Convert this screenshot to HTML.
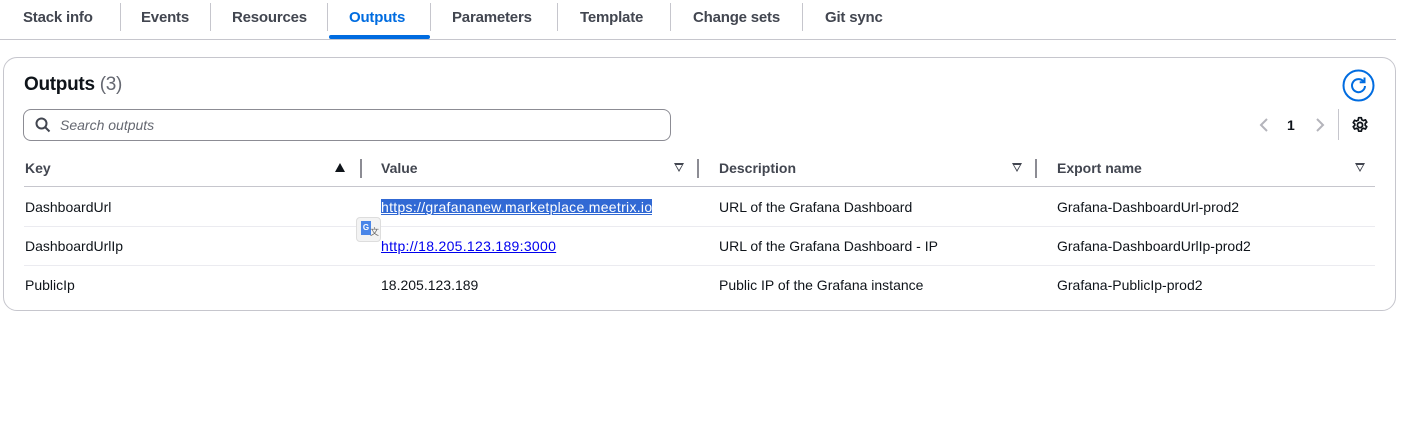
<!DOCTYPE html>
<html><head><meta charset="utf-8"><style>
*{box-sizing:border-box;margin:0;padding:0}
body{width:1419px;height:437px;background:#fff;font-family:"Liberation Sans",Arial,sans-serif;color:#0f141a;position:relative;overflow:hidden}
.a{position:absolute;white-space:nowrap}
.tab{position:absolute;top:9px;font-size:15px;font-weight:bold;color:#424650;letter-spacing:-0.2px}
.sep{position:absolute;top:3px;width:1px;height:28px;background:#c6c6cd}
.th{position:absolute;top:160px;font-size:14px;font-weight:bold;color:#424650}
.td{position:absolute;font-size:14px;color:#0f141a}
.cs{position:absolute;top:159px;width:2px;height:19px;background:#8c8c94}
.rl{position:absolute;left:24px;width:1351px;height:1px;background:#ebebf0}
a{color:#0000ee}
.tri{position:absolute;top:163px;width:0;height:0;border-left:5px solid transparent;border-right:5px solid transparent}
</style></head><body>
<div class="tab" style="left:23px">Stack info</div>
<div class="sep" style="left:120px"></div>
<div class="tab" style="left:141px">Events</div>
<div class="sep" style="left:210px"></div>
<div class="tab" style="left:232px">Resources</div>
<div class="sep" style="left:327px"></div>
<div class="tab" style="left:349px;color:#006ce0">Outputs</div>
<div class="a" style="left:329px;top:35px;width:101px;height:4px;background:#006ce0;border-radius:2px"></div>
<div class="sep" style="left:430px"></div>
<div class="tab" style="left:452px">Parameters</div>
<div class="sep" style="left:557px"></div>
<div class="tab" style="left:580px">Template</div>
<div class="sep" style="left:670px"></div>
<div class="tab" style="left:693px">Change sets</div>
<div class="sep" style="left:802px"></div>
<div class="tab" style="left:825px">Git sync</div>
<div class="a" style="left:0;top:39px;width:1396px;height:1px;background:#c6c6cd"></div>

<div class="a" style="left:3px;top:57px;width:1393px;height:254px;border:1px solid #c6c6cd;border-radius:14px"></div>
<div class="a" style="left:24px;top:74px;font-size:19px;font-weight:bold;letter-spacing:-0.3px">Outputs <span style="font-weight:normal;color:#656871">(3)</span></div>
<svg class="a" style="left:1342px;top:69px" width="33" height="33" viewBox="0 0 33 33"><circle cx="16.5" cy="16.5" r="15" fill="none" stroke="#006ce0" stroke-width="2"/><path d="M21.5 12.5 A6.5 6.5 0 1 0 23 17" fill="none" stroke="#006ce0" stroke-width="2"/><path d="M22.5 8.5 v4.8 h-4.8" fill="none" stroke="#006ce0" stroke-width="2"/></svg>

<div class="a" style="left:23px;top:109px;width:648px;height:32px;border:1px solid #8c8c94;border-radius:8px"></div>
<svg class="a" style="left:35px;top:117px" width="16" height="16" viewBox="0 0 16 16"><circle cx="6.5" cy="6.5" r="5" fill="none" stroke="#424650" stroke-width="2"/><path d="M10 10l4.5 4.5" stroke="#424650" stroke-width="2"/></svg>
<div class="a" style="left:60px;top:117px;font-size:14px;font-style:italic;color:#656871">Search outputs</div>

<svg class="a" style="left:1258px;top:117px" width="12" height="16" viewBox="0 0 12 16"><path d="M9 2L3 8l6 6" fill="none" stroke="#b4b4bb" stroke-width="2"/></svg>
<div class="a" style="left:1287px;top:117px;font-size:14px;font-weight:bold">1</div>
<svg class="a" style="left:1314px;top:117px" width="12" height="16" viewBox="0 0 12 16"><path d="M3 2l6 6-6 6" fill="none" stroke="#b4b4bb" stroke-width="2"/></svg>
<div class="a" style="left:1338px;top:109px;width:1px;height:31px;background:#c6c6cd"></div>
<svg class="a" style="left:1351px;top:116px" width="18" height="18" viewBox="0 0 16 16"><circle cx="8" cy="8" r="2.3" fill="none" stroke="#0f141a" stroke-width="1.6"/><path d="M6.8 1.5h2.4l.4 1.8 1.5.8 1.7-.7 1.2 2.1-1.4 1.2v1.6l1.4 1.2-1.2 2.1-1.7-.7-1.5.8-.4 1.8H6.8l-.4-1.8-1.5-.8-1.7.7-1.2-2.1 1.4-1.2V7.1L2 5.9l1.2-2.1 1.7.7 1.5-.8z" fill="none" stroke="#0f141a" stroke-width="1.5" stroke-linejoin="round"/></svg>

<div class="th" style="left:25px">Key</div>
<div class="tri" style="left:335px;border-bottom:9px solid #0f141a;top:163px"></div>
<div class="cs" style="left:360px"></div>
<div class="th" style="left:381px">Value</div>
<div class="tri" style="left:674px;border-top:9px solid #424650"></div>
<div class="a" style="left:676px;top:165px;width:0;height:0;border-left:3px solid transparent;border-right:3px solid transparent;border-top:5px solid #fff"></div>
<div class="cs" style="left:697px"></div>
<div class="th" style="left:719px">Description</div>
<div class="tri" style="left:1012px;border-top:9px solid #424650"></div>
<div class="a" style="left:1014px;top:165px;width:0;height:0;border-left:3px solid transparent;border-right:3px solid transparent;border-top:5px solid #fff"></div>
<div class="cs" style="left:1035px"></div>
<div class="th" style="left:1057px">Export name</div>
<div class="tri" style="left:1355px;border-top:9px solid #424650"></div>
<div class="a" style="left:1357px;top:165px;width:0;height:0;border-left:3px solid transparent;border-right:3px solid transparent;border-top:5px solid #fff"></div>
<div class="a" style="left:24px;top:186px;width:1351px;height:1px;background:#c6c6cd"></div>

<div class="td" style="left:25px;top:199px">DashboardUrl</div>
<div class="td" style="left:381px;top:199px;background:#3169d4;letter-spacing:0.3px"><a style="color:#fff" href="#">https://grafananew.marketplace.meetrix.io</a></div>
<div class="td" style="left:719px;top:199px">URL of the Grafana Dashboard</div>
<div class="td" style="left:1057px;top:199px">Grafana-DashboardUrl-prod2</div>
<div class="rl" style="top:226px"></div>
<div class="td" style="left:25px;top:238px">DashboardUrlIp</div>
<div class="td" style="left:381px;top:238px;letter-spacing:0.3px"><a href="#">http://18.205.123.189:3000</a></div>
<div class="td" style="left:719px;top:238px">URL of the Grafana Dashboard - IP</div>
<div class="td" style="left:1057px;top:238px">Grafana-DashboardUrlIp-prod2</div>
<div class="rl" style="top:265px"></div>
<div class="td" style="left:25px;top:277px">PublicIp</div>
<div class="td" style="left:381px;top:277px">18.205.123.189</div>
<div class="td" style="left:719px;top:277px">Public IP of the Grafana instance</div>
<div class="td" style="left:1057px;top:277px">Grafana-PublicIp-prod2</div>

<div class="a" style="left:356px;top:217px;width:25px;height:25px;background:#f3f3f3;border:1px solid #ddd;border-radius:4px"></div>
<div class="a" style="left:361px;top:221px;width:10px;height:14px;background:#4a86e8;color:#fff;font-size:8px;font-weight:bold;text-align:center;line-height:13px">G</div>
<div class="a" style="left:370px;top:225px;font-size:9px;color:#666">文</div>
</body></html>
